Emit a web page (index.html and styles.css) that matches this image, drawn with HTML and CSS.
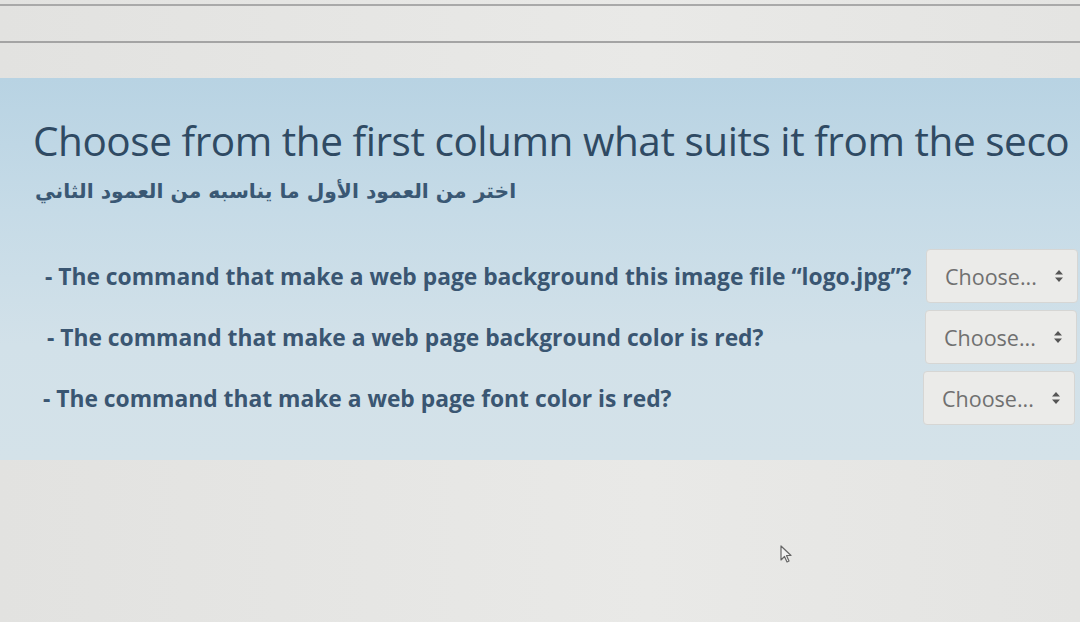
FILE: index.html
```html
<!DOCTYPE html>
<html lang="en">
<head>
<meta charset="utf-8">
<title>Question</title>
<link rel="stylesheet" href="styles.css">
</head>
<body>
<div class="topbar"></div>
<section class="panel">
  <h1 class="title">Choose from the first column what suits it from the seco</h1>
  <p class="arabic" dir="rtl">اختر من العمود الأول ما يناسبه من العمود الثاني</p>
  <div class="rows">
    <div class="row r1">
      <span class="q">- The command that make a web page background this image file “logo.jpg”?</span>
      <div class="sel">Choose... <svg class="arr" viewBox="0 0 10 14" width="10" height="14"><path d="M5 1 L9 5.5 H1 Z M5 13 L9 8.5 H1 Z" fill="#555"/></svg></div>
    </div>
    <div class="row r2">
      <span class="q">- The command that make a web page background color is red?</span>
      <div class="sel">Choose... <svg class="arr" viewBox="0 0 10 14" width="10" height="14"><path d="M5 1 L9 5.5 H1 Z M5 13 L9 8.5 H1 Z" fill="#555"/></svg></div>
    </div>
    <div class="row r3">
      <span class="q">- The command that make a web page font color is red?</span>
      <div class="sel">Choose... <svg class="arr" viewBox="0 0 10 14" width="10" height="14"><path d="M5 1 L9 5.5 H1 Z M5 13 L9 8.5 H1 Z" fill="#555"/></svg></div>
    </div>
  </div>
</section>
<svg class="cursor" viewBox="0 0 14 20" width="14" height="20"><path d="M1 1 V15 L4.5 11.5 L7 17 L9 16 L6.5 10.5 H11 Z" fill="#f2f2f2" stroke="#666" stroke-width="1.2" stroke-linejoin="round"/></svg>
</body>
</html>
```
FILE: styles.css
```css
html, body {
  margin: 0;
  padding: 0;
  overflow: hidden;
}
body {
  width: 1080px;
  height: 622px;
  background: linear-gradient(90deg, #e2e2e0 0%, #e9e9e7 60%, #e4e4e2 100%);
  font-family: "Open Sans", "DejaVu Sans", sans-serif;
  position: relative;
}
.topbar {
  height: 35px;
  margin-top: 4px;
  border-top: 2px solid #a9a9a9;
  border-bottom: 2px solid #a4a4a4;
}
.panel {
  margin-top: 35px;
  width: 1080px;
  height: 382px;
  background: linear-gradient(180deg, #b8d3e3 0%, #c6dbe7 35%, #d2e1e9 70%, #d4e2e9 100%);
  padding: 38px 0 0 33px;
  box-sizing: border-box;
}
.title {
  margin: 0;
  font-weight: 400;
  font-size: 40.5px;
  line-height: 49px;
  letter-spacing: -0.45px;
  color: #2f4a63;
  white-space: nowrap;
}
.arabic {
  margin: 15px 0 0 2px;
  width: 482px;
  font-family: "DejaVu Sans", sans-serif;
  font-weight: 700;
  font-size: 20.3px;
  line-height: 23px;
  color: #3a5874;
  text-align: left;
}
.rows {
  margin-top: 46px;
  width: 1045px;
  display: flex;
  flex-direction: column;
  gap: 7px;
}
.row {
  display: flex;
  align-items: center;
  justify-content: space-between;
  height: 54px;
}
.r1 .q { margin-left: 12px; }
.r2 .q { margin-left: 14px; }
.r3 .q { margin-left: 10px; }
.r2 .sel { margin-right: 1px; }
.r3 .sel { margin-right: 3px; }
.q {
  font-weight: 700;
  font-size: 22.8px;
  color: #3a5672;
  white-space: nowrap;
}
.sel {
  width: 152px;
  height: 54px;
  box-sizing: border-box;
  background: #ebebe9;
  border: 1px solid #d6d6d4;
  border-radius: 4px;
  display: flex;
  align-items: center;
  justify-content: space-between;
  padding: 0 13px 0 18px;
  font-size: 21.5px;
  color: #707070;
}
.arr { display: block; }
.cursor {
  position: absolute;
  left: 780px;
  top: 545px;
}
```
